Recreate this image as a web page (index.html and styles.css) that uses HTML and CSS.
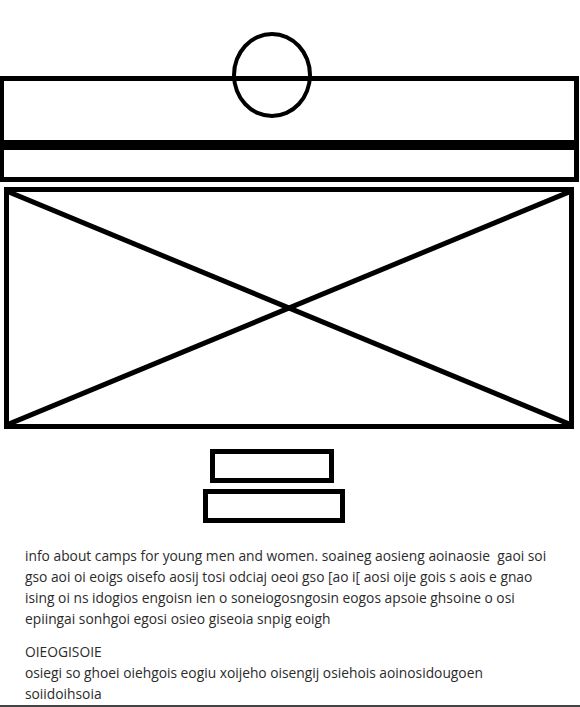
FILE: index.html
```html
<!DOCTYPE html>
<html lang="en">
<head>
    <meta charset="UTF-8">
    <meta name="viewport" content="width=device-width, initial-scale=1.0">
    <title>Camps wireframe</title>
    <link rel="stylesheet" href="styles.css">
</head>
<body>
    <div class="page">
        <header class="masthead">
            <div class="logo"></div>
            <div class="masthead-top"></div>
            <div class="masthead-nav"></div>
        </header>

        <div class="hero">
            <svg class="hero-x" viewBox="0 0 100 100" preserveAspectRatio="none">
                <line x1="0" y1="0" x2="100" y2="100" />
                <line x1="0" y1="100" x2="100" y2="0" />
            </svg>
        </div>

        <div class="buttons">
            <div class="btn btn-small"></div>
            <div class="btn btn-wide"></div>
        </div>

        <div class="info">
            <p>info about camps for young men and women. soaineg aosieng aoinaosie&nbsp; gaoi soi<br>
            gso aoi oi eoigs oisefo aosij tosi odciaj oeoi gso [ao i[ aosi oije gois s aois e gnao<br>
            ising oi ns idogios engoisn ien o soneiogosngosin eogos apsoie ghsoine o osi<br>
            epiingai sonhgoi egosi osieo giseoia snpig eoigh</p>
            <p>OIEOGISOIE<br>
            osiegi so ghoei oiehgois eogiu xoijeho oisengij osiehois aoinosidougoen<br>
            soiidoihsoia</p>
        </div>
    </div>
</body>
</html>
```

FILE: styles.css
```css
html, body {
    margin: 0;
    padding: 0;
    background-color: #fff;
}
.page {
    width: 580px;
    height: 707px;
    overflow: hidden;
    border-bottom: 2px solid #444;
    box-sizing: border-box;
}
.masthead {
    position: relative;
    margin: 76px 1px 0 0;
    border: 5px solid #000;
    border-left-width: 4px;
}
.logo {
    position: absolute;
    left: 228px;
    top: -49px;
    width: 72px;
    height: 78px;
    border: 4px solid #000;
    border-radius: 50%;
}
.masthead-top {
    height: 59px;
    border-bottom: 10px solid #000;
}
.masthead-nav {
    height: 27px;
}
.hero {
    margin: 5px 6px 0 4px;
    height: 232px;
    border: 5px solid #000;
}
.hero-x {
    display: block;
    width: 100%;
    height: 100%;
}
.hero-x line {
    stroke: #000;
    stroke-width: 5;
    vector-effect: non-scaling-stroke;
}
.buttons {
    display: flex;
    flex-direction: column;
    align-items: center;
    gap: 6px;
    margin-top: 20px;
    padding-right: 32px;
}
.btn {
    height: 24px;
    border: 5px solid #000;
}
.btn-small {
    width: 114px;
    margin-right: 5px;
}
.btn-wide {
    width: 132px;
}
.info {
    margin-top: 22px;
    padding-left: 25px;
    font-family: "Open Sans", sans-serif;
    font-size: 13.8px;
    line-height: 21px;
    color: #2b2b2b;
}
.info p {
    margin: 0 0 12px;
    white-space: nowrap;
}
```
